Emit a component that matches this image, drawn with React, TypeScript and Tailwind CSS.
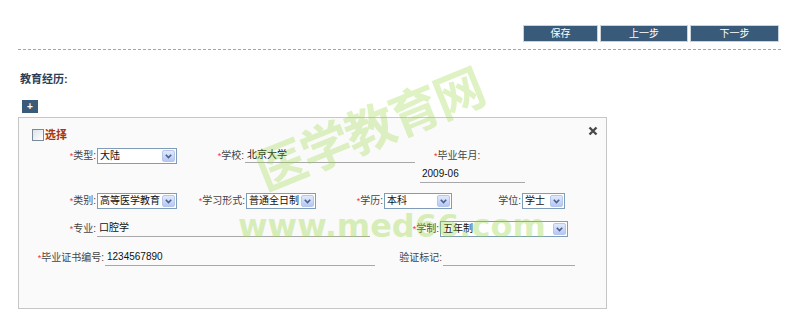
import React from "react";

const FONT = { fontFamily: '"Liberation Sans", "Noto Sans CJK SC", sans-serif' };

function Label({ w, text, req = true }: { w: string; text: string; req?: boolean }) {
  return (
    <div className={`${w} text-right whitespace-nowrap pr-[1px] text-[10px] leading-[16px] text-[#444]`}>
      {req && <span className="text-[#f0303a] text-[9px]">*</span>}
      {text}
    </div>
  );
}

function Select({ w, value }: { w: string; value: string }) {
  return (
    <div className={`${w} h-[16px] border border-[#7f9db9] bg-white flex items-center`}>
      <span className="flex-1 pl-[2px] text-[10px] leading-[14px] text-[#111] whitespace-nowrap overflow-hidden">{value}</span>
      <span className="w-[13px] h-[12px] mr-[1px] rounded-[2px] border border-[#b7c7ec] bg-gradient-to-b from-[#e1eafc] to-[#b5c8f3] flex items-center justify-center">
        <svg width="7" height="5" viewBox="0 0 7 5">
          <path d="M0.8 0.8 L3.5 3.6 L6.2 0.8" fill="none" stroke="#4b5f86" strokeWidth="1.6" />
        </svg>
      </span>
    </div>
  );
}

function Field({ w, value = "", cls = "h-[15px]" }: { w: string; value?: string; cls?: string }) {
  return (
    <div className={`${w} ${cls} border-b border-[#a8a8a8] pl-[2px] text-[10px] leading-[14px] text-[#111] whitespace-nowrap`}>
      {value}
    </div>
  );
}

export default function App() {
  return (
    <div className="relative w-[792px] h-[319px] bg-white overflow-hidden" style={FONT}>
      {/* top buttons */}
      <div className="flex justify-end gap-[4px] pt-[26px] pr-[14px]">
        {[
          ["保存", "w-[73px]"],
          ["上一步", "w-[86px]"],
          ["下一步", "w-[87px]"],
        ].map(([t, w]) => (
          <div
            key={t}
            className={`${w} h-[15px] bg-[#3a5a79] outline outline-1 outline-[#c9d3dc] text-white text-[10px] leading-[15px] text-center`}
          >
            {t}
          </div>
        ))}
      </div>
      <div className="mt-[8px] ml-[18px] mr-[11px] border-t border-dashed border-[#a5a5a5]" />

      <div className="mt-[22px] pl-[20px] text-[11px] leading-[14px] font-bold text-[#2a3f57]">教育经历:</div>

      <div className="mt-[14px] ml-[22px] w-[16px] h-[13px] bg-[#3a5a79] text-white text-[10px] leading-[13px] text-center font-bold">
        +
      </div>

      {/* panel */}
      <div className="mt-[4px] ml-[18px] w-[589px] h-[192px] border border-[#c6c6c6] bg-[#fafafa]">
        <div className="flex justify-between pt-[8px] pr-[8px]">
          <div className="mt-[3px] ml-[13px] flex items-center h-[12px]">
            <span className="w-[12px] h-[12px] border border-[#7a8a99] bg-gradient-to-br from-[#dde3ea] to-white" />
            <span className="ml-[1px] text-[11px] leading-[12px] font-bold text-[#a8360c]">选择</span>
          </div>
          <svg width="10" height="10" viewBox="0 0 10 10">
            <path d="M1.5 1.5 L8.5 8.5 M8.5 1.5 L1.5 8.5" stroke="#4a4a4a" strokeWidth="2.4" />
          </svg>
        </div>

        {/* row 1 */}
        <div className="mt-[7px] flex items-start">
          <Label w="w-[78px]" text="类型:" />
          <Select w="w-[80px]" value="大陆" />
          <Label w="w-[68px]" text="学校:" />
          <Field w="w-[170px]" value="北京大学" />
          <div className="ml-[5px] w-[105px]">
            <div className="pl-[14px] mt-[1px] h-[16px] text-[10px] leading-[14px] text-[#444] whitespace-nowrap">
              <span className="text-[#f0303a] text-[9px]">*</span>毕业年月:
            </div>
            <Field w="w-[105px]" value="2009-06" cls="h-[18px] pt-[2px]" />
          </div>
        </div>

        {/* row 2 */}
        <div className="mt-[10px] flex items-start">
          <Label w="w-[78px]" text="类别:" />
          <Select w="w-[80px]" value="高等医学教育" />
          <Label w="w-[69px]" text="学习形式:" />
          <Select w="w-[70px]" value="普通全日制" />
          <Label w="w-[68px]" text="学历:" />
          <Select w="w-[68px]" value="本科" />
          <Label w="w-[70px]" text="学位:" req={false} />
          <Select w="w-[43px]" value="学士" />
        </div>

        {/* row 3 */}
        <div className="mt-[12px] flex items-start">
          <Label w="w-[78px]" text="专业:" />
          <Field w="w-[273px]" value="口腔学" cls="h-[16px]" />
          <Label w="w-[70px]" text="学制:" />
          <Select w="w-[128px]" value="五年制" />
        </div>

        {/* row 4 */}
        <div className="mt-[13px] flex items-start">
          <Label w="w-[86px]" text="毕业证书编号:" />
          <Field w="w-[270px]" value="1234567890" cls="h-[16px]" />
          <Label w="w-[68px]" text="验证标记:" req={false} />
          <Field w="w-[132px]" cls="h-[16px]" />
        </div>
      </div>

      {/* watermark */}
      <div
        className="pointer-events-none absolute left-[240px] top-[100px] w-[256px] text-center text-[50px] leading-[52px] font-bold tracking-[-2px] text-[#96d63c] opacity-30 whitespace-nowrap -rotate-[22deg]"
        style={{ fontFamily: '"Noto Sans CJK SC", sans-serif' }}
      >
        医学教育网
      </div>
      <div
        className="pointer-events-none absolute left-[238px] top-[210px] text-[32px] leading-[32px] font-bold text-[#96d63c] opacity-35 whitespace-nowrap"
        style={{ fontFamily: '"DejaVu Sans", sans-serif' }}
      >
        www.med66.com
      </div>
    </div>
  );
}
